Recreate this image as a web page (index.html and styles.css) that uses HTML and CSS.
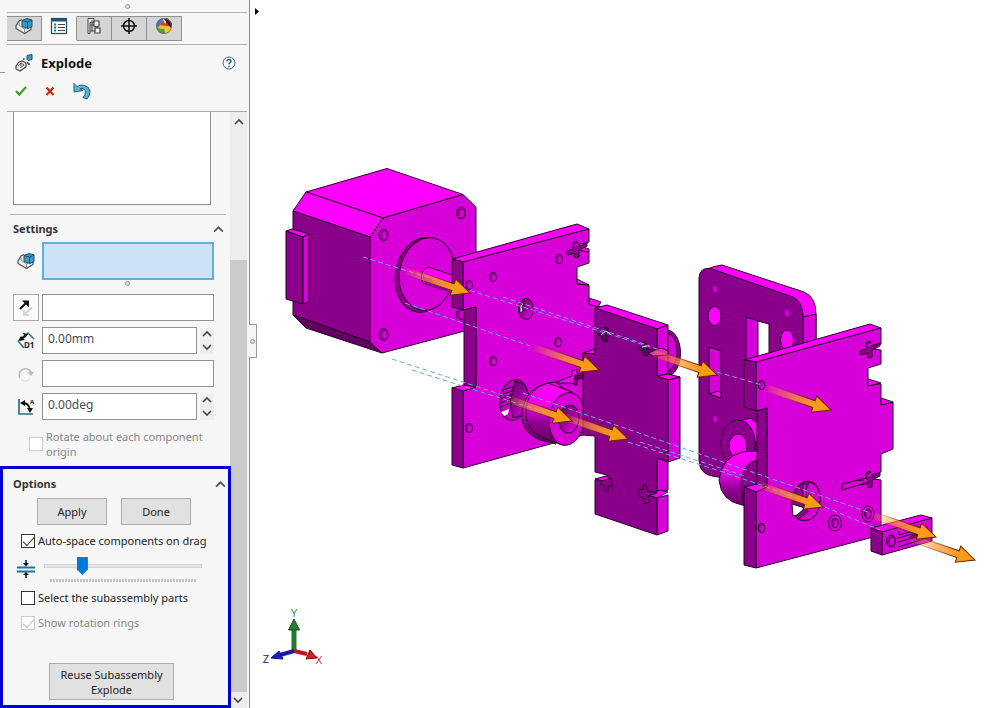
FILE: index.html
```html
<!DOCTYPE html>
<html lang="en">
<head>
<meta charset="utf-8">
<title>Explode</title>
<link rel="stylesheet" href="styles.css">
</head>
<body>
<svg class="defs" aria-hidden="true">
  <defs>
    <symbol id="i-assembly" viewBox="0 0 18 18">
      <path d="M7 2.500 4 4 1 9v2.500l8.500 5 6.500-4V8" fill="#eee" stroke="#555" stroke-width="1.300"/>
      <path d="M4 5v3l5.500 4v4M9.500 12l3-2" fill="none" stroke="#888"/>
      <path d="M7 3.500 12 1.500l5 1.500v6.500l-4 2-6-2z" fill="#3b9cc4" stroke="#174e69"/>
      <path d="M7 3.500l5.500 1.500 4.500-2M12.500 5v6" fill="none" stroke="#174e69"/>
    </symbol>
    <symbol id="i-list" viewBox="0 0 18 18">
      <rect x="1.500" y="1.500" width="15" height="15" fill="#fff" stroke="#27475a" stroke-width="1.200"/>
      <path d="M1 3h16" stroke="#1e5878" stroke-width="3"/>
      <path d="M4 7.500h2M4 10.500h2M4 13.500h2" stroke="#1c78a5" stroke-width="2"/>
      <path d="M8 7.500h7M8 10.500h7M8 13.500h7" stroke="#444" stroke-width="1.200"/>
    </symbol>
    <symbol id="i-config" viewBox="0 0 18 18">
      <path d="M3 1.500h6v4H5v11H3z" fill="#eee" stroke="#444"/>
      <path d="M5 8h5M5 14h5M7 3v11" stroke="#444" fill="none"/>
      <path d="M9 4h5v5l-2 1-3-1zM10 11h5v5h-5z" fill="#f4f4f4" stroke="#444" stroke-width="1.200"/>
    </symbol>
    <symbol id="i-target" viewBox="0 0 18 18">
      <circle cx="9" cy="9" r="5.500" fill="none" stroke="#111" stroke-width="1.500"/>
      <path d="M9 1v16M1 9h16" stroke="#111" stroke-width="1.500"/>
    </symbol>
    <symbol id="i-ball" viewBox="0 0 18 18">
      <path d="M9 9 1 9A8 8 0 0 1 8 1z" fill="#3f74c9"/>
      <path d="M9 9 8 1a8 8 0 0 1 5 1z" fill="#eee"/>
      <path d="M9 9 13 2a8 8 0 0 1 4 8z" fill="#c92a24"/>
      <path d="M9 9l8 1a8 8 0 0 1-7 7z" fill="#efc72e"/>
      <path d="M9 9l1 8a8 8 0 0 1-9-8z" fill="#45a345"/>
      <path d="M8 3 3 11q5 2 9 0z" fill="#e6c52c"/>
      <path d="M8 3 5 8l6 1z" fill="#d53b29"/>
      <path d="M9 2l3-1 5 6-1 4z" fill="#291c1b"/>
      <circle cx="9" cy="9" r="7.500" fill="none" stroke="#666" stroke-width=".8"/>
    </symbol>
    <symbol id="i-explode" viewBox="0 0 18 18">
      <path d="M1 12l3-4 3-1 4 2v4l-6 4-4-2z" fill="#eee" stroke="#444" stroke-width="1.200"/>
      <path d="M3 12l3-3 3 2-4 3M6 9v3" stroke="#555" fill="none"/>
      <path d="M8 5h3M12 9h2M14 11v-2" stroke="#222" stroke-width="1.600" stroke-dasharray="1.500 1.500"/>
      <path d="M12 1.500l5-1v5l-4 1-1-1z" fill="#3b9cc4" stroke="#174e69"/>
    </symbol>
    <symbol id="i-chevron" viewBox="0 0 10 10">
      <path d="M1 7 5 3l4 4" fill="none" stroke="currentColor" stroke-width="1.600"/>
    </symbol>
  </defs>
</svg>
<div class="app">
  <aside class="sidebar">
    <div class="grip"><span class="ring"></span></div>
    <nav class="tabs" aria-label="Manager tabs">
      <button class="tab" aria-label="Feature tree"><svg class="icon"><use href="#i-assembly"/></svg></button>
      <button class="tab tab-active" aria-label="Properties"><svg class="icon"><use href="#i-list"/></svg></button>
      <button class="tab" aria-label="Configurations"><svg class="icon"><use href="#i-config"/></svg></button>
      <button class="tab" aria-label="Dimensions"><svg class="icon"><use href="#i-target"/></svg></button>
      <button class="tab" aria-label="Display"><svg class="icon"><use href="#i-ball"/></svg></button>
    </nav>
    <header class="title-row">
      <svg class="icon"><use href="#i-explode"/></svg>
      <h1 class="title">Explode</h1>
      <button class="plain" aria-label="Help"><svg class="help" viewBox="0 0 14 14"><circle cx="7" cy="7" r="6" fill="#f7fbff" stroke="#4b6275"/><path d="M5 5.400q0-2 2-2t2 1.800q0 1-1.200 1.600Q7 7.300 7 8.500M7 9.700v1.300" fill="none" stroke="#225f8c" stroke-width="1.500"/></svg></button>
    </header>
    <div class="actions">
      <button class="plain" aria-label="OK"><svg class="mark" viewBox="0 0 12 12"><path d="M1 6 4.300 9.500 11 2" fill="none" stroke="#3c9b2c" stroke-width="2.200"/></svg></button>
      <button class="plain" aria-label="Cancel"><svg class="mark" viewBox="0 0 12 12"><path d="M2.500 2.500l7 7.500M9.500 2.500l-7 7.500" stroke="#c22c10" stroke-width="2.200"/></svg></button>
      <button class="plain" aria-label="Undo"><svg class="icon" viewBox="0 0 18 18"><path d="M1 1.500v8.500l9-1.500-3-2Q12 6 12.500 10 12.500 13 10 15.500l4 1.500q3.500-4 3-8T12 3.500Q8 2 4 4.500z" fill="#5db1d0" stroke="#245f7a"/></svg></button>
    </div>
    <div class="body">
      <div class="panel">
        <div class="steps"></div>
        <section class="settings">
          <div class="heading"><h2 class="subtitle">Settings</h2><button class="plain" aria-label="Collapse settings"><svg class="chev"><use href="#i-chevron"/></svg></button></div>
          <div class="field field-tall"><svg class="icon"><use href="#i-assembly"/></svg><input class="box box-selected" aria-label="Explode step components"></div>
          <div class="divot"><span class="ring"></span></div>
          <div class="fields">
            <div class="field"><button class="flip" aria-label="Reverse direction"><svg class="icon" viewBox="0 0 18 18"><path d="M3 10l7-7" stroke="#111" stroke-width="2.200"/><path d="M5 1.500h7v7z" fill="#111"/><path d="M15 8l-7 7M7 11v5h5" fill="none" stroke="#ccc" stroke-width="1.600"/></svg></button><input class="box" aria-label="Explode direction"></div>
            <div class="field"><svg class="icon" viewBox="0 0 18 18"><path d="M6 6l5-5 6 6" fill="none" stroke="#32718c" stroke-width="1.500"/><path d="M3 8l6-5" stroke="#111" stroke-width="2"/><path d="M1 9l3-5 4 4zM6 1l5 1-3 4z" fill="#111"/><path d="M1 9l6 7" stroke="#32718c" stroke-width="1.500"/><text class="d1" x="7" y="16">D1</text></svg><input class="box" aria-label="Explode distance" value="0.00mm"><span class="spin"><button class="plain" aria-label="Increase distance"><svg class="step"><use href="#i-chevron"/></svg></button><button class="plain down" aria-label="Decrease distance"><svg class="step"><use href="#i-chevron"/></svg></button></span></div>
            <div class="field"><svg class="icon" viewBox="0 0 18 18"><path d="M3 13A6 6 0 1 1 14 7" fill="none" stroke="#bbb" stroke-width="1.600"/><path d="M10 7h7l-3 4z" fill="#bbb"/><path d="M4 14q5 5 10-1" fill="none" stroke="#ddd"/></svg><input class="box" aria-label="Rotation axis"></div>
            <div class="field"><svg class="icon" viewBox="0 0 18 18"><path d="M2 1v15h14" fill="none" stroke="#2d6d89" stroke-width="1.700"/><path d="M6 5q6 0 7 7" fill="none" stroke="#111" stroke-width="1.800"/><path d="M3 5l5-3v6zM10 10h6l-3 5z" fill="#111"/><text class="ang" x="13" y="6">A</text></svg><input class="box" aria-label="Rotation angle" value="0.00deg"><span class="spin"><button class="plain" aria-label="Increase angle"><svg class="step"><use href="#i-chevron"/></svg></button><button class="plain down" aria-label="Decrease angle"><svg class="step"><use href="#i-chevron"/></svg></button></span></div>
          </div>
          <label class="check check-rotate"><input type="checkbox" disabled><span>Rotate about each component origin</span></label>
        </section>
        <section class="options">
          <div class="heading"><h2 class="subtitle">Options</h2><button class="plain" aria-label="Collapse options"><svg class="chev"><use href="#i-chevron"/></svg></button></div>
          <div class="pair"><button class="btn">Apply</button><button class="btn">Done</button></div>
          <label class="check"><input type="checkbox" checked><span>Auto-space components on drag</span></label>
          <div class="spacing">
            <svg class="icon" viewBox="0 0 18 18"><path d="M0 7.500h18" stroke="#16779c" stroke-width="2"/><path d="M0 11.500h18" stroke="#16779c" stroke-width="2"/><path d="M9 0v4M9 18v-4" stroke="#111" stroke-width="1.500"/><path d="M6 3h6L9 6.500zM6 15h6l-3-3z" fill="#111"/></svg>
            <div class="slide"><input class="range" type="range" min="0" max="100" value="22" aria-label="Component spacing"><div class="ticks"></div></div>
          </div>
          <label class="check"><input type="checkbox"><span>Select the subassembly parts</span></label>
          <label class="check check-last"><input type="checkbox" checked disabled><span>Show rotation rings</span></label>
          <button class="btn btn-reuse">Reuse Subassembly Explode</button>
        </section>
      </div>
      <div class="scroll">
        <button class="plain" aria-label="Scroll up"><svg class="step"><use href="#i-chevron"/></svg></button>
        <div class="thumb"></div>
        <button class="plain down" aria-label="Scroll down"><svg class="step"><use href="#i-chevron"/></svg></button>
      </div>
    </div>
  </aside>
  <main class="view">
    <svg class="model" viewBox="250 0 750 708" role="img" aria-label="Exploded assembly">
      <defs>
        <linearGradient id="fade" gradientUnits="userSpaceOnUse" x1="-68" y1="0" x2="-18" y2="0">
          <stop offset="0" stop-color="#ffa030" stop-opacity="0.1"/><stop offset=".6" stop-color="#ff9838" stop-opacity=".75"/><stop offset="1" stop-color="#ff9a18"/>
        </linearGradient>
        <linearGradient id="edge" gradientUnits="userSpaceOnUse" x1="-68" y1="0" x2="-18" y2="0">
          <stop offset="0" stop-color="#803000" stop-opacity="0.050"/><stop offset="1" stop-color="#5a2800"/>
        </linearGradient>
        <linearGradient id="round" x1="0" y1="0" x2="0" y2="1">
          <stop offset="0" stop-color="#f0f"/><stop offset=".35" stop-color="#f000f0"/><stop offset=".65" stop-color="#900090"/><stop offset="1" stop-color="#600060"/>
        </linearGradient>
        <linearGradient id="bore" x1="0" y1="0" x2="1" y2="1">
          <stop offset="0" stop-color="#600060"/><stop offset=".5" stop-color="#9c009c"/><stop offset="1" stop-color="#f0f"/>
        </linearGradient>
        <g id="arrow"><path d="M-68-3.500h50v-5L0 0-18 8.500v-5h-50z" fill="url(#fade)" stroke="url(#edge)"/></g>
        <g id="hole"><ellipse rx="3.300" ry="4.500" fill="#a000a0" stroke="#300030"/><ellipse cx=".8" cy=".8" rx="1.800" ry="3" fill="#d800d8" stroke="none"/></g>
        <g id="screw"><ellipse rx="4.500" ry="6" fill="#a000a0" stroke="#300030"/><ellipse cx="1" cy=".5" rx="2.600" ry="4.300" fill="#d800d8" stroke="#500050" stroke-width=".6"/></g>
        <g id="cross"><path class="lo" d="M-8 3l6-2v-6l4-2 2 5 8-3v3l-8 4v7l-4 1-1-5-5 2-2-1z"/><path class="mid" d="M-1-3l4-2 1 2-4 2z" stroke="none"/></g>
      </defs>

      <path d="M255 8l4 3.500-4 3.500z" fill="#000"/>

      <g class="line">
        <path class="hi" d="M306 192 387 168.500 463 194.500 383 218z"/>
        <path class="hi" d="M306 192 383 218 370 237 293 211z"/>
        <path class="lo" d="M293 211 370 237V342L293 315z"/>
        <path class="deep" d="M293 315 370 342 382 353 306 328z"/>
        <path class="mid" d="M383 218 463 194.500 476 207V328L382 353 370 342V237z"/>
        <path class="hi" d="M286 231 292 229 309 234 303 237z"/>
        <path class="lo" d="M286 231 303 237V304L286 299z"/>
        <path class="mid" d="M303 237 309 234V302L303 304z"/>
        <ellipse class="lo" cx="423" cy="275" rx="27.500" ry="37.500" transform="rotate(10 423 275)"/>
        <ellipse class="mid" cx="427" cy="274" rx="27.500" ry="36.500" transform="rotate(10 427 274)"/>
        <path class="hi" d="M428 267 458 277V294L425 284Q420 281 422 273 424 268 428 267z"/>
        <path d="M425 284 458 294V286L423 276z" fill="#a000a0" stroke="none"/>
        <use href="#screw" x="383.500" y="235"/><use href="#screw" x="461" y="213"/><use href="#screw" x="383.500" y="334.500"/><use href="#screw" x="461" y="314"/>
      </g>

      <g class="line">
        <path class="hi" d="M452 259 577 224 589 229 463 262z"/>
        <path class="mid" d="M463 262 589 229V242L577 245V249L589 252V263L577 267V284L589 285V304L601 307V430L583 435 463 468V391L476 387V307L463 310z"/>
        <path class="lo" d="M452 259 463 262V310L452 307z"/>
        <path class="lo" d="M464 310 476 307V387L464 385z"/>
        <path class="hi" d="M452 388 463 385 476 387 463 391z"/>
        <path class="lo" d="M452 388 463 391V468L452 465z"/>
        <path class="hi" d="M577 279 589 285 577 284zM589 298 601 302 598 307 589 304zM577 245 589 249V252L577 250z"/>
        <use href="#cross" x="575" y="248"/>
        <use href="#hole" x="469" y="285"/><use href="#hole" x="493" y="277"/><use href="#hole" x="559" y="259"/><use href="#hole" x="558" y="342"/><use href="#hole" x="493" y="361"/><use href="#hole" x="469" y="428"/>
        <ellipse cx="526" cy="309" rx="7.500" ry="10.500" fill="url(#bore)"/>
        <path d="M520 305l4-2-2 4 1 4-3 2z" fill="#fff"/>
        <ellipse cx="514" cy="400" rx="14" ry="20.500" fill="#c400c4" transform="rotate(10 514 400)"/>
        <path d="M515 381Q507 400 513 418 526 416 528 400 529 383 515 381z" fill="url(#bore)"/>
        <path d="M501 395l13-5M500 399l13-5M500 403l13-5M500 407l13-5M503 390l11-4" fill="none"/>
        <path d="M501 412l8-3-1 5-4 2z" fill="#fff" stroke="none"/>
        <path class="hi" d="M554 383l18-7v-5l5-2v5l6-1v3l-7 4 1 5-6-2z"/>
        <path class="deep" d="M575 375l8 0v3l-6 2v5l-4-1z"/>
        <path d="M555 382Q529 384 523 407T540 440l16 4 10-54z" fill="url(#round)"/>
        <path d="M572 392 548 383Q529 388 526 408T542 438l22 7z" fill="url(#round)"/>
        <ellipse class="mid" cx="567" cy="419" rx="17.500" ry="26.500" transform="rotate(8 567 419)"/>
        <ellipse cx="569" cy="419" rx="10" ry="14" fill="url(#bore)" transform="rotate(8 569 419)"/>
      </g>

      <g class="line">
        <ellipse class="lo" cx="667" cy="353" rx="13.500" ry="23"/>
        <ellipse class="mid" cx="664" cy="352" rx="13" ry="20"/>
        <path class="hi" d="M595 308 607 305 668 325 657 329z"/>
        <path class="mid" d="M657 329 668 325V374L657 377z"/>
        <path class="hi" d="M657 376 668 374 680 377 668 380z"/>
        <path class="mid" d="M668 380 680 377V458L668 462zM657 458 668 462V490L657 493zM657 498 668 495V531L657 535z"/>
        <path class="hi" d="M583 353 595 349V354z"/>
        <path d="M595 308 657 329V376L668 380V462L657 458V493L646 491V495L657 498V535L595 514V480L607 477V475L595 472V436L583 435V353L595 354z" fill="#8b008b"/>
        <path class="hi" d="M595 479 606 476 612 479 603 481zM648 495 660 490 668 492 657 498z"/>
        <path class="deep" d="M598 333l5 1 1-7 4 1v5l4 2-5 2v5l-4-1-1-4-4-2zM639 347l4 1v-6l4 2v5l12 2-9 2-3 3-4-1v-4l-4-1z"/>
        <path class="lo" d="M602 481l8-3 2 2v7l-4-1v6l-4-2v-5l-4-1zM639 489l4 1v-6l4 2v5l10 2-9 3 2 6-6 2v-6l-5-1z"/>
        <path d="M601 335l5-4 4 3M642 347l5-1" fill="none" stroke="#fff"/>
        <path d="M648 353l13-5 7 3v4l-15 1z" fill="#e236b8"/>
      </g>

      <g class="line">
        <path class="hi" d="M705 271Q709 267 722 265L804 292Q816 297 816 314V340H803V315L797 300z"/>
        <path class="mid" d="M803 317 816 314V345H803z"/>
        <path class="lo" d="M699 278Q700 266 712 269L793 297Q803 302 803 317V440L770 490 718 477Q699 476 699 460z"/>
        <path class="mid" d="M746 317 758 321V370H746z"/><path d="M758 321 769 324V370H758z" fill="#fff"/>
        <path class="mid" d="M709 347 721 351V398L709 394z"/><path class="hi" d="M709 394 718 391 721 393V398z"/>
        <g stroke="#b000b0"><ellipse class="mid" cx="715" cy="289" rx="2" ry="3"/><ellipse class="mid" cx="787" cy="313" rx="2.300" ry="3.500"/><ellipse class="mid" cx="715" cy="419" rx="2" ry="3"/></g>
        <ellipse class="hi" cx="714.500" cy="316" rx="6.500" ry="9.500"/><ellipse class="hi" cx="787" cy="340" rx="6.500" ry="10"/>
        <path d="M739 421 750 418 770 430V460z" class="hi"/>
        <ellipse class="lo" cx="738" cy="443" rx="17" ry="23"/><ellipse class="hi" cx="738" cy="446" rx="9" ry="12"/>
        <path d="M742 452 756 451H770V510L742 505Q721 501 719 480 722 457 742 452z" fill="url(#round)"/>
        <path class="lo" d="M757 460Q741 464 741 486L744 506H760z"/>
      </g>

      <g class="line">
        <path class="hi" d="M744 360 870 324 881 328 756 362z"/>
        <path class="mid" d="M756 362 881 328V344L868 346V348L881 350V364L868 368V385L881 384V405L893 402V449L881 454V472L868 476V478L881 480V535L756 568V492L767 487V408L756 411z"/>
        <path class="lo" d="M744 360 756 362V411L744 407z"/>
        <path class="lo" d="M757 411 767 408V487L757 485z"/>
        <path class="hi" d="M744 487 756 484 767 487 756 492z"/>
        <path class="lo" d="M744 487 756 492V568L744 565z"/>
        <path class="hi" d="M868 379 881 383 868 386zM881 398 893 402 881 405z"/>
        <use href="#cross" x="868" y="348"/><use href="#cross" x="868" y="478"/>
        <path class="mid" d="M842 484 866 478 869 482 842 490z"/><path d="M857 480l6-1v2z" fill="#fff"/>
        <use href="#hole" x="761.500" y="385"/><use href="#hole" x="761.500" y="528"/>
        <g fill="none"><ellipse cx="835" cy="523" rx="6.500" ry="8"/><ellipse cx="868" cy="514" rx="6" ry="8"/></g>
        <use href="#hole" x="835" y="523"/><use href="#hole" x="868" y="514"/>
        <ellipse class="lo" cx="806" cy="501" rx="14" ry="20" transform="rotate(10 806 501)"/>
        <path class="mid" d="M809 482Q801 497 808 512L798 519Q818 525 820 500 821 485 809 482z"/>
        <path d="M792 504l13 4-8 7-4 1z" fill="#fff"/><path class="hi" d="M803 484l3 1v13l-3-1z"/>
      </g>

      <g class="line">
        <path class="hi" d="M871 528 921 515 932 518 882 532z"/>
        <path class="mid" d="M882 532 932 518V541L882 555z"/>
        <path class="lo" d="M871 528 882 532V555L871 551z"/>
        <use href="#screw" x="891" y="541"/>
        <path d="M899 531v4l29-8M898 538l29-8M898 542l29-8M898 547l29-9" fill="none"/>
        <path class="deep" d="M911 536l6-2v3l-6 1z"/>
      </g>

      <path class="trail" d="M363 257 660 350M503 297 650 346M405 303 530 346M392 359 512 398M412 370 560 417M523 393 868 512M628 442 720 471 825 507M640 442 745 476M825 507 880 530M717 372 762 385"/>
      <use href="#arrow" transform="translate(470 293) rotate(19)"/>
      <use href="#arrow" transform="translate(599 370) rotate(19)"/>
      <use href="#arrow" transform="translate(628 439) rotate(19)"/>
      <use href="#arrow" transform="translate(572 421) rotate(19)"/>
      <use href="#arrow" transform="translate(717 375) rotate(19)"/>
      <use href="#arrow" transform="translate(831 410) rotate(19)"/>
      <use href="#arrow" transform="translate(823 507) rotate(19)"/>
      <use href="#arrow" transform="translate(975 560) rotate(19)"/>
      <use href="#arrow" transform="translate(936 537) rotate(19)"/>

      <path d="M294 628v23" stroke="#237a2c" stroke-width="5"/><path d="M294 619l5.500 11h-11z" fill="#258030" stroke="#174d1c"/>
      <path d="M294 651l13 3" stroke="#c01818" stroke-width="4"/><path d="M317 658l-11 1 4-9z" fill="#d02020" stroke="#801010"/>
      <path d="M294 651l-14 4" stroke="#1818a0" stroke-width="4"/><path d="M271 658l8-7 4 8z" fill="#1c1cd0" stroke="#101070"/>
      <text class="axis axis-y" x="294" y="617">Y</text><text class="axis axis-z" x="266" y="663">Z</text><text class="axis axis-x" x="319" y="664">X</text>
    </svg>
    <button class="splitter" aria-label="Collapse panel"><span class="ring"></span></button>
  </main>
</div>
</body>
</html>
```
FILE: styles.css
```css
* { box-sizing: border-box; }
body { margin: 0; background: #fff; color: #222; font: 11px/15px "Noto Sans", "Open Sans", sans-serif; }
button, input { font: inherit; color: inherit; margin: 0; }
h1, h2 { margin: 0; }
svg { display: block; flex: none; }
.defs { position: absolute; width: 0; height: 0; }
.app { display: flex; height: 100vh; min-height: 708px; }

.sidebar { display: flex; flex-direction: column; flex: none; width: 250px; background: #f6f6f6; border-right: 1px solid #8a8a8a; }
.grip { display: flex; justify-content: center; align-items: center; height: 13px; margin: 0 2px 0 7px; border-bottom: 1px solid #b4b4b4; }
.ring { display: block; width: 5px; height: 5px; border: 1px solid #999; border-radius: 50%; background: #ddd; }
.tabs { display: flex; margin: 0 2px 0 7px; padding: 3px 0; border-bottom: 1px solid #b0b0b0; }
.tab { display: flex; justify-content: center; align-items: center; width: 35px; height: 25px; padding: 0 0 6px; background: #d5d5d5; border: 1px solid #909090; border-left: 0; }
.tab-active { background: #f8f8f8; border-color: #f8f8f8 #909090 #f8f8f8 #f8f8f8; }
.icon { width: 18px; height: 18px; }
.plain { display: flex; justify-content: center; align-items: center; padding: 0; border: 0; background: none; }
.title-row { position: relative; display: flex; align-items: center; gap: 8px; height: 36px; padding: 0 13px 0 15px; }
.title-row::before { content: ""; position: absolute; left: 0; bottom: 8px; width: 5px; border-top: 1px solid #999; }
.title { flex: 1; font-size: 13px; line-height: 18px; color: #111; }
.help { width: 14px; height: 14px; }
.actions { display: flex; align-items: center; gap: 17px; height: 31px; margin: 0 2px 0 7px; padding: 0 0 10px 8px; border-bottom: 1px solid #aaa; }
.mark { width: 12px; height: 12px; }
.body { display: flex; flex: 1; min-height: 0; }
.panel { display: flex; flex-direction: column; flex: 1; min-width: 0; }
.steps { height: 93px; margin: 0 19px 9px 13px; background: #fff; border: 1px solid #8c8c8c; border-top: 0; }
.settings { flex: 1; margin: 0 4px 0 10px; border-top: 1px solid #b0b0b0; padding: 5px 12px 0 3px; }
.heading { display: flex; justify-content: space-between; align-items: center; height: 18px; }
.subtitle { font-size: 11px; line-height: 18px; color: #333; }
.settings .heading { margin-right: -10px; }
.chev { width: 11px; height: 11px; color: #555; }
.field { display: flex; align-items: center; gap: 3px; height: 27px; }
.field > .icon { margin: 0 4px; }
.field-tall { height: 38px; margin-top: 4px; }
.box { flex: 1; min-width: 0; height: 100%; padding: 0 5px 4px; border: 1px solid #929292; background: #fff; color: #4a4a5a; outline: 0; border-radius: 0; font-size: 12px; }
.box-selected { border: 2px solid #5fb0de; background: #cce3f7; }
.divot { display: flex; justify-content: center; padding: 1px 0 8px 28px; }
.fields { display: grid; grid-template-columns: minmax(0, 1fr); gap: 6px; }
.flip { display: flex; justify-content: center; align-items: center; width: 26px; height: 27px; padding: 0; background: #fafafa; border: 1px solid #aaa; }
.spin { display: flex; flex-direction: column; justify-content: space-around; width: 14px; height: 26px; background: #eee; }
.step { width: 10px; height: 10px; color: #444; }
.down { transform: rotate(180deg); }
.d1 { font: bold 8px "Noto Sans", sans-serif; fill: #222; }
.ang { font: bold 6px "Noto Sans", sans-serif; fill: #222; }
.check { display: flex; align-items: center; gap: 3px; }
.check input { appearance: none; flex: none; display: grid; place-items: center; width: 14px; height: 14px; background: #fff; border: 1px solid #333; }
.check input:checked::before { content: ""; width: 10px; height: 5px; border: solid #333; border-width: 0 0 1px 1px; transform: translateY(-1px) rotate(-47deg); }
.check input:disabled { border-color: #ccc; }
.check input:disabled:checked::before { border-color: #bbb; }
.check input:disabled + span { color: #858585; }
.check-rotate { margin: 9px 0 0 16px; }
.options { display: flex; flex-direction: column; flex: none; width: 231px; height: 242px; padding: 6px 2px 5px 10px; border: 3px solid #0000d0; position: relative; }
.pair { display: flex; gap: 14px; margin: 5px 0 8px 24px; }
.btn { width: 70px; height: 27px; padding: 0; border: 1px solid #adadad; background: #e1e1e1; }
.options .check { margin-left: 8px; }
.spacing { display: flex; align-items: center; gap: 9px; height: 28px; margin: 7px 0 7px 4px; }
.slide { width: 158px; }
.range { appearance: none; display: block; width: 100%; height: 20px; margin: 0; background: none; }
.range::-webkit-slider-runnable-track { height: 4px; background: #e7e7e7; border: 1px solid #d2d2d2; }
.range::-webkit-slider-thumb { appearance: none; width: 11px; height: 18px; margin-top: -8px; background: #0078d7; clip-path: polygon(0 0, 100% 0, 100% 70%, 50% 100%, 0 70%); }
.ticks { height: 3px; margin: 3px 6px 0; background: repeating-linear-gradient(90deg, #c4c4c4 0 2px, transparent 2px 3px); }
.options .check-last { margin-top: 10px; }
.btn-reuse { width: 125px; height: 37px; margin: auto 0 0 36px; padding: 0 8px; }
.scroll { display: flex; flex-direction: column; width: 17px; margin-right: 2px; background: #ededed; }
.scroll .plain { height: 20px; }
.scroll .down { height: 16px; }
.thumb { flex: 1; margin-top: 128px; background: #cbcbcb; }

.view { position: relative; flex: 1; min-width: 0; background: #fff; }
.model { width: 100%; height: 100%; }
.line { stroke: #280028; stroke-width: 1; stroke-linejoin: round; }
.hi { fill: #ff00ff; }
.mid { fill: #d800d8; }
.lo { fill: #8b008b; }
.deep { fill: #620062; }
.trail { fill: none; stroke: #72a8df; stroke-width: 1; stroke-dasharray: 5 3; }
.axis { font: 11px "Open Sans", sans-serif; text-anchor: middle; }
.axis-y { fill: #3a7c40; }
.axis-z { fill: #202080; }
.axis-x { fill: #c83030; }
.splitter { position: absolute; left: -1px; top: 324px; display: flex; justify-content: center; align-items: center; width: 8px; height: 34px; padding: 0; background: #f6f6f6; border: 1px solid #999; border-left: 0; }
```
